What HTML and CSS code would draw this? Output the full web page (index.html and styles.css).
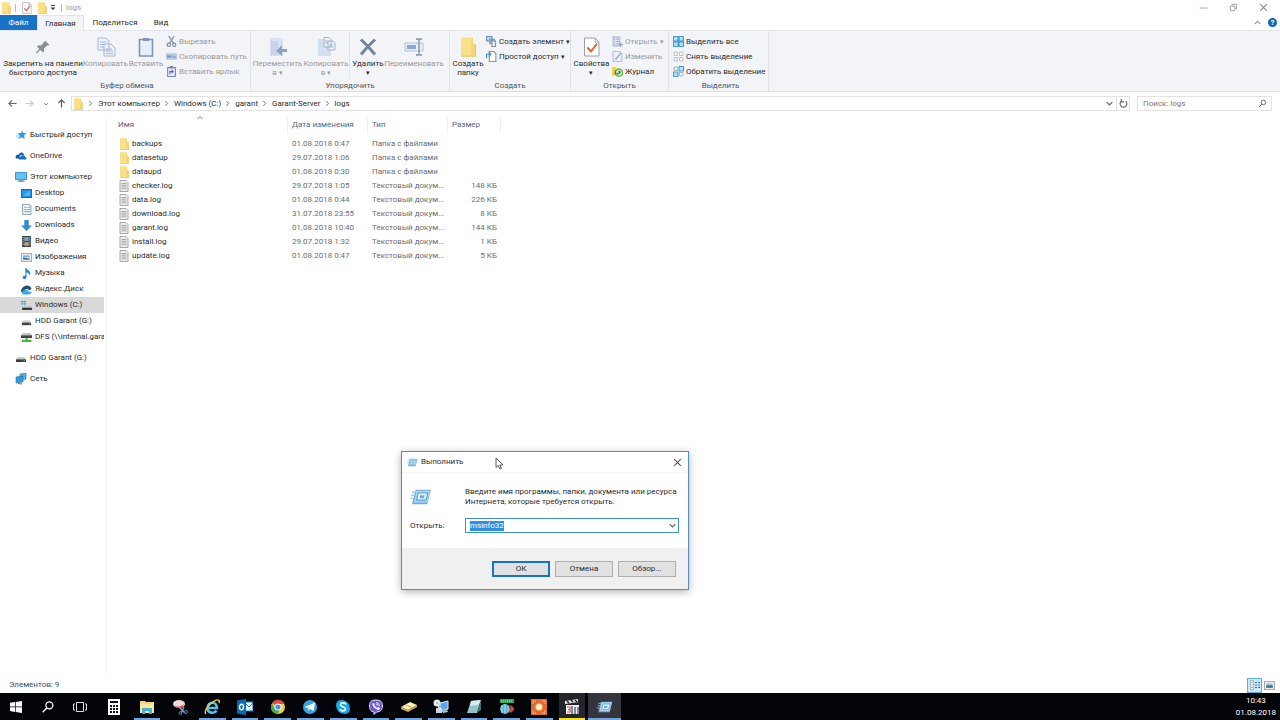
FILE: index.html
```html
<!DOCTYPE html>
<html lang="ru">
<head>
<meta charset="utf-8">
<title>logs</title>
<link rel="stylesheet" href="styles.css">
</head>
<body>
<svg class="sprite" aria-hidden="true">
  <symbol id="folder" viewBox="0 0 12 12"><path d="M2 .5h7v3l1.500 1v7H2z" fill="#f5d777"/><path d="M2 .5h5l1 1v10H2z" fill="#fbe08a"/><path d="M2 11.500h8.500V4.500" fill="none" stroke="#e6c765" stroke-width=".7"/></symbol>
  <symbol id="file" viewBox="0 0 12 12"><path d="M2 .5h6l2 2v9H2z" fill="#efefef" stroke="#949494" stroke-width=".8"/><path d="M3.500 3.500h5M3.500 5.200h5M3.500 7h5M3.500 8.800h5" stroke="#9a9fa3" stroke-width=".9"/></symbol>
  <symbol id="drive" viewBox="0 0 12 12"><path d="M2.500 5h7l1.500 2.500H1z" fill="#c9c9c9"/><path d="M1 7.300h10v2.700H1z" fill="#3d3f42"/><path d="M8.500 8.300h1.500v.8H8.500z" fill="#7bdc74"/></symbol>
  <symbol id="run" viewBox="0 0 24 20"><path d="M6 2h17l-4 16H2z" fill="#72addb"/><path d="M7 3h15l-3 13H4z" fill="#a9d5f1"/><path d="M9 5.500h10.500l-2 8H7z" fill="#e9f7ff" stroke="#5a9fd2" stroke-width="1.200"/><path d="M11 8h5l-.8 3.500h-5z" fill="#69abd9"/><path d="M2 4.500h4M1 8h4M0 11.500h4" stroke="#9ac8e8" stroke-width="1.300"/></symbol>
  <symbol id="check" viewBox="0 0 18 20"><path d="M1.500 1h10.500l4 4v14H1.500z" fill="#fff" stroke="#9aa0a6"/><path d="M12 1v4h4" fill="none" stroke="#9aa0a6"/><path d="M4.500 10.500l3.500 4 6-8" fill="none" stroke="#e2603b" stroke-width="2"/></symbol>
  <symbol id="copy" viewBox="0 0 20 20"><path d="M2 1h8l3 3v9H2zM8 7h7l4 4v8H8z" fill="#edf1fa" stroke="#a9b7d4"/><path d="M4 5h6M4 7.500h4M4 10h4M10 12h6M10 14h7M10 16.500h7" stroke="#a5b6dc"/></symbol>
  <symbol id="chev" viewBox="0 0 6 6"><path d="M2 1l2 2-2 2" fill="none" stroke="#666" stroke-width=".8"/></symbol>
  <symbol id="down" viewBox="0 0 8 8"><path d="M1.500 2.800L4 5.300l2.500-2.500" fill="none" stroke="#666" stroke-width="1.100"/></symbol>
  <symbol id="glass" viewBox="0 0 12 12"><circle cx="7.200" cy="4.600" r="3" fill="none" stroke="currentColor" stroke-width="1.100"/><path d="M5 6.800L1.500 10.500" stroke="currentColor" stroke-width="1.300"/></symbol>
  <symbol id="close" viewBox="0 0 10 10"><path d="M2 2l6 6m0-6l-6 6" stroke="currentColor" fill="none"/></symbol>
</svg>

<header class="titlebar">
  <svg class="icon12"><use href="#folder"/></svg><i class="rule"></i>
  <button class="quick" aria-label="Свойства"><svg class="icon12"><use href="#check"/></svg></button>
  <button class="quick" aria-label="Новая папка"><svg class="icon12"><use href="#folder"/></svg></button>
  <button class="quick narrow" aria-label="Настройка панели"><svg class="icon6" viewBox="0 0 6 6"><path d="M1 .5h4" stroke="#444"/><path d="M.5 2.500h5L3 5z" fill="#333"/></svg></button>
  <i class="rule"></i><span class="window-name">logs</span>
  <div class="window-buttons">
    <button aria-label="Свернуть"><svg class="icon10" viewBox="0 0 10 10"><path d="M1.500 5.500h7" stroke="#aaa"/></svg></button>
    <button aria-label="Восстановить"><svg class="icon8" viewBox="0 0 10 10"><path d="M3.500 3V1.500h5v5H7M1.500 3.500h5v5h-5z" fill="none" stroke="#999"/></svg></button>
    <button aria-label="Закрыть"><svg class="icon10"><use href="#close"/></svg></button>
  </div>
</header>

<nav class="tabs">
  <button class="tab file-tab">Файл</button>
  <button class="tab active">Главная</button>
  <button class="tab share">Поделиться</button>
  <button class="tab view">Вид</button>
  <div class="tab-tools">
    <button aria-label="Свернуть ленту"><svg class="icon8" viewBox="0 0 8 8"><path d="M1.500 5.500L4 3l2.500 2.500" fill="none" stroke="#999"/></svg></button>
    <button class="help" aria-label="Справка">?</button>
  </div>
</nav>

<section class="ribbon">
  <div class="group g-clip">
    <div class="tools">
      <button class="big w-pin"><svg class="icon20" viewBox="0 0 20 20"><path d="M12.500 4l4 4-1.500.8-1-.3-3 3 .1 2.800-1.200 1.200-6-6 1.200-1.200 2.800.1 3-3-.2-1z" fill="#8a8f96"/><path d="M7.500 11.500l-4 4.500" stroke="#8a8f96" stroke-width="1.300"/></svg><span>Закрепить на панели<br>быстрого доступа</span></button>
      <button class="big w-copy off"><svg class="icon20"><use href="#copy"/></svg><span>Копировать</span></button>
      <button class="big w-paste off"><svg class="icon20" viewBox="0 0 20 20"><path d="M3.500 2.500h13V19h-13z" fill="#e9effa" stroke="#7f93b7" stroke-width="1.600"/><path d="M7 1h6v3H7z" fill="#7f93b7"/></svg><span>Вставить</span></button>
      <div class="small-list">
        <button class="small off"><svg class="icon10" viewBox="0 0 10 10"><path d="M2.500 0L7 7M7.500 0L3 7" stroke="#8795b0" stroke-width="1.200"/><circle cx="2.500" cy="8" r="1.500" fill="none" stroke="#7888a8"/><circle cx="7.500" cy="8" r="1.500" fill="none" stroke="#7888a8"/></svg>Вырезать</button>
        <button class="small off"><svg class="icon10" viewBox="0 0 10 10"><path d="M0 2h10v6H0z" fill="#b9cae6"/><path d="M1 4l1 2 1-2 1 2 1-2M6 5.500h3" fill="none" stroke="#6c7fa6" stroke-width=".8"/></svg>Скопировать путь</button>
        <button class="small off"><svg class="icon10" viewBox="0 0 10 10"><path d="M1.500 1.500h7v8h-7z" fill="#e8effb" stroke="#7487b0"/><path d="M3.500 0h3v2h-3z" fill="#7487b0"/><path d="M3.500 7.500V5H6M5 3.500L6.500 5 5 6.500" fill="none" stroke="#526da4"/></svg>Вставить ярлык</button>
      </div>
    </div>
    <div class="caption">Буфер обмена</div>
  </div>
  <div class="group g-arrange">
    <div class="tools">
      <button class="big w-move off"><svg class="icon20" viewBox="0 0 20 20"><path d="M2 1h13v18H2z" fill="#d9e2f3"/><path d="M3 4h7v14H3z" fill="#c7d4eb"/><path d="M19 12h-5V8l-6 6 6 5v-4h5z" fill="#8da1c5"/></svg><span>Переместить<br>в <small>▾</small></span></button>
      <button class="big w-to off"><svg class="icon20" viewBox="0 0 20 20"><path d="M2 2h13v17H2z" fill="#d3deef"/><path d="M8 .5h5l2 2V10H8zM12 4h5l2 2v7h-7z" fill="#edf2fa" stroke="#a4b3d0"/><path d="M9 4h4M9 6h3M13 8h4M13 10h4" stroke="#a4b3d0"/></svg><span>Копировать<br>в <small>▾</small></span></button>
      <i class="inner-rule"></i>
      <button class="big w-delete"><svg class="icon20" viewBox="0 0 20 20"><path d="M3 2.500Q10 9 17 17.500M17 2.500Q9 10 3 17.500" fill="none" stroke="#71839f" stroke-width="3"/></svg><span>Удалить<br><small>▾</small></span></button>
      <button class="big w-rename off"><svg class="icon20" viewBox="0 0 20 20"><path d="M1 6h18v8H1z" fill="#e7edf8" stroke="#b4c1da"/><path d="M3 8h9v4H3z" fill="#91a5cc"/><path d="M12 2h2l1 1 1-1h2M15 3v14M12 18h2l1-1 1 1h2" fill="none" stroke="#7f8ca6" stroke-width="1.300"/></svg><span>Переименовать</span></button>
    </div>
    <div class="caption">Упорядочить</div>
  </div>
  <div class="group g-new">
    <div class="tools">
      <button class="big w-new"><svg class="icon20"><use href="#folder"/></svg><span>Создать<br>папку</span></button>
      <div class="small-list">
        <button class="small"><svg class="icon10" viewBox="0 0 10 10"><path d="M.5.5h5v4h-5zM3.500 3h4v4h-4z" fill="#b8dcf3" stroke="#6b8dac"/><path d="M5.500 4.500h3v5h-3z" fill="#fff" stroke="#7a8896"/></svg>Создать элемент <small>▾</small></button>
        <button class="small"><svg class="icon10" viewBox="0 0 10 10"><path d="M3 .5h4l2 2v7H3z" fill="#fff" stroke="#8b9298"/><path d="M.5 6.500V3H4M2.500 1L4.500 3l-2 2" fill="none" stroke="#3e91cf"/></svg>Простой доступ <small>▾</small></button>
      </div>
    </div>
    <div class="caption">Создать</div>
  </div>
  <div class="group g-open">
    <div class="tools">
      <button class="big w-props"><svg class="icon20"><use href="#check"/></svg><span>Свойства<br><small>▾</small></span></button>
      <div class="small-list">
        <button class="small off"><svg class="icon10" viewBox="0 0 10 10"><path d="M1 1h6v8H1z" fill="#e4eafa" stroke="#a9b5d0"/><path d="M2 3h1m1 0h2M2 5h1m1 0h2M2 7h1m1 0h2" stroke="#8699c0"/><path d="M8 6v4M6 8h4" stroke="#91a1c0"/></svg>Открыть <small>▾</small></button>
        <button class="small off"><svg class="icon10" viewBox="0 0 10 10"><path d="M1 .5h6l2 2v7H1z" fill="#edf2fc" stroke="#b4c0d9"/><path d="M3 8l5-6" stroke="#9baed4" stroke-width="1.500"/></svg>Изменить</button>
        <button class="small"><svg class="icon10" viewBox="0 0 10 10"><path d="M0 1h3l1 1h3v7H0z" fill="#f0d34c"/><circle cx="6.500" cy="6" r="3.300" fill="#d7e4d1" stroke="#45a535"/><path d="M6.500 4v2.500L8 5M3 4v3h3" fill="none" stroke="#25852b"/></svg>Журнал</button>
      </div>
    </div>
    <div class="caption">Открыть</div>
  </div>
  <div class="group g-select">
    <div class="tools">
      <div class="small-list">
        <button class="small"><svg class="icon10" viewBox="0 0 10 10"><path d="M.5.5h4v4h-4zM5.500.5h4v4h-4zM.5 5.500h4v4h-4zM5.500 5.500h4v4h-4z" fill="#b5e0f8" stroke="#4b9dd0"/></svg>Выделить все</button>
        <button class="small"><svg class="icon10" viewBox="0 0 10 10"><path d="M1 1h3v3H1zM6 1h3v3H6zM1 6h3v3H1zM6 6h3v3H6z" fill="#fff" stroke="#b4b9be" stroke-width=".8"/></svg>Снять выделение</button>
        <button class="small"><svg class="icon10" viewBox="0 0 10 10"><path d="M1 1h3v3H1zM6 6h3v3H6z" fill="#fff" stroke="#8aa7bd" stroke-width=".8"/><path d="M5.500.5h4v4h-4zM.5 5.500h4v4h-4z" fill="#b5e0f8" stroke="#4b9dd0"/></svg>Обратить выделение</button>
      </div>
    </div>
    <div class="caption">Выделить</div>
  </div>
</section>

<div class="navbar">
  <div class="nav-arrows">
    <button aria-label="Назад"><svg class="icon8" viewBox="0 0 10 10"><path d="M9.500 5H1M4.500 1.500L1 5l3.500 3.500" fill="none" stroke="#666" stroke-width="1.300"/></svg></button>
    <button aria-label="Вперед"><svg class="icon8" viewBox="0 0 10 10"><path d="M.5 5H9M5.500 1.500L9 5 5.500 8.500" fill="none" stroke="#ccc" stroke-width="1.300"/></svg></button>
    <button aria-label="Последние"><svg class="icon6"><use href="#down"/></svg></button>
    <button aria-label="Вверх"><svg class="icon8" viewBox="0 0 10 10"><path d="M5 9.500V1M1.500 4.500L5 1l3.500 3.500" fill="none" stroke="#555" stroke-width="1.300"/></svg></button>
  </div>
  <div class="address">
    <svg class="icon12"><use href="#folder"/></svg>
    <svg class="sep"><use href="#chev"/></svg><a href="#">Этот компьютер</a>
    <svg class="sep"><use href="#chev"/></svg><a href="#">Windows (C:)</a>
    <svg class="sep"><use href="#chev"/></svg><a href="#">garant</a>
    <svg class="sep"><use href="#chev"/></svg><a href="#">Garant-Server</a>
    <svg class="sep"><use href="#chev"/></svg><a href="#">logs</a>
    <button class="drop" aria-label="Адреса"><svg class="icon8"><use href="#down"/></svg></button>
    <button class="refresh" aria-label="Обновить"><svg class="icon8" viewBox="0 0 8 8"><path d="M2 2a3 3 0 1 0 4 0M2 0v2.500h2.500" fill="none" stroke="#666"/></svg></button>
  </div>
  <label class="search"><input type="search" placeholder="Поиск: logs" aria-label="Поиск: logs"><svg class="icon8"><use href="#glass"/></svg></label>
</div>

<main class="content">
  <nav class="sidebar">
    <a class="place" href="#"><svg class="icon12" viewBox="0 0 12 12"><path d="M7 1l1 3 3.500.5-2.500 2 .8 3.500-3-1.800L4 10l.8-3.500L2.500 4.500 6 4z" fill="#2f97e0"/><path d="M1 7h3M2 9h2" stroke="#86c6ef"/></svg>Быстрый доступ</a>
    <a class="place" href="#"><svg class="icon12" viewBox="0 0 12 12"><path d="M1 8.500C-.5 5 3 4 4 4.500 5 1.500 9 2 9 5c-3-1-5 .5-5 3.500z" fill="#0a5ca8"/><path d="M4 9.500C2.500 7 5 6 6 6.500c1-2.500 4-1.500 4 .5 2 0 2 2.500.5 2.500z" fill="#1672c4"/></svg>OneDrive</a>
    <div>
      <a class="place" href="#"><svg class="icon12" viewBox="0 0 12 12"><path d="M.5 1.500h11v7H.5z" fill="#62c4f2" stroke="#3e95c4"/><path d="M4 9h4v1.500H4zM2.500 10.500h7" fill="#789" stroke="#86a6b9"/></svg>Этот компьютер</a>
      <a class="place sub" href="#"><svg class="icon10" viewBox="0 0 10 10"><path d="M.5 1.500h9v7h-9z" fill="#209aec" stroke="#176eb0"/><path d="M2 7l6-5v5z" fill="#4db9f6"/></svg>Desktop</a>
      <a class="place sub" href="#"><svg class="icon10" viewBox="0 0 10 10"><path d="M1.500.5h6l1.500 1.500v7.500H1.500z" fill="#f4f9fc" stroke="#99a8b1"/><path d="M3 3h2m1 0h2M3 5h2m1 0h2M3 7h5" stroke="#5b9dc4"/></svg>Documents</a>
      <a class="place sub" href="#"><svg class="icon10" viewBox="0 0 10 10"><path d="M3 0h4v5h3L5 10 0 5h3z" fill="#3889cf"/></svg>Downloads</a>
      <a class="place sub" href="#"><svg class="icon10" viewBox="0 0 10 10"><path d="M1 0h8v10H1z" fill="#3b4148"/><path d="M3 1h4v3.500H3z" fill="#7aa8d8"/><path d="M3 5.500h4V9H3z" fill="#b2a088"/><path d="M2 1v8M8 1v8" stroke="#ddd" stroke-dasharray="1" stroke-width=".8"/></svg>Видео</a>
      <a class="place sub" href="#"><svg class="icon10" viewBox="0 0 10 10"><path d="M.5 1.500h9v7h-9z" fill="#fff" stroke="#a6afb5"/><path d="M2 3h6v2H2z" fill="#73b9e8"/><path d="M2 7V4.500l2 1 4 .5v1z" fill="#356b8e"/></svg>Изображения</a>
      <a class="place sub" href="#"><svg class="icon10" viewBox="0 0 10 10"><path d="M4 0h1c0 2 3.500 2 3.500 5L7.500 6.500c0-2-2-2.500-2.500-2.500v4c0 3-4 2.500-3.500.2C2 7 3 7 4 7z" fill="#168bd3"/></svg>Музыка</a>
      <a class="place sub" href="#"><svg class="icon10" viewBox="0 0 10 10"><path d="M0 7C0 2 7-1 9.500 4L8 6C5 3 3 5 3 8z" fill="#25506f"/><path d="M1 9c0-5 5-5 6-2h3c-1 3-6 3-9 2z" fill="#3aa5e7"/></svg>Яндекс.Диск</a>
      <a class="place sub selected" href="#"><svg class="icon10" viewBox="0 0 10 10"><path d="M0 1h2v1H0zM2.500 1h2v1h-2zM0 3h2v1H0zM2.500 3h2v1h-2z" fill="#18a7e2"/><path d="M2 5h7l1 2H1z" fill="#c6c9cc"/><path d="M1 7h9v2H1z" fill="#333"/></svg>Windows (C:)</a>
      <a class="place sub" href="#"><svg class="icon10"><use href="#drive"/></svg>HDD Garant (G:)</a>
      <a class="place sub" href="#"><svg class="icon10" viewBox="0 0 10 10"><path d="M1.500 1h7L10 3H0z" fill="#c4c7c9"/><path d="M0 3h10v2.500H0z" fill="#444"/><path d="M4 5.500h2V7h3.500v2h-9V7H4z" fill="#47b648"/></svg>DFS (\\internal.gara</a>
    </div>
    <a class="place" href="#"><svg class="icon12"><use href="#drive"/></svg>HDD Garant (G:)</a>
    <a class="place" href="#"><svg class="icon12" viewBox="0 0 12 12"><path d="M5 1l6-1v6l-6 1z" fill="#58aee3" stroke="#286b9e" stroke-width=".6"/><path d="M1 4l7-1v6l-7 1z" fill="#329ad8" stroke="#286b9e" stroke-width=".6"/><path d="M3 10.500l4 .5" stroke="#54778d"/></svg>Сеть</a>
  </nav>
  <section class="files">
    <table>
      <colgroup><col class="c-name"><col class="c-date"><col class="c-type"><col class="c-size"></colgroup>
      <thead><tr><th><span class="sort"><svg class="icon6" viewBox="0 0 6 6"><path d="M.5 4L3 1.500 5.500 4" fill="none" stroke="#888"/></svg></span>Имя</th><th>Дата изменения</th><th>Тип</th><th>Размер</th></tr></thead>
      <tbody>
        <tr><td><svg class="icon12"><use href="#folder"/></svg>backups</td><td>01.08.2018 0:47</td><td>Папка с файлами</td><td></td></tr>
        <tr><td><svg class="icon12"><use href="#folder"/></svg>datasetup</td><td>29.07.2018 1:06</td><td>Папка с файлами</td><td></td></tr>
        <tr><td><svg class="icon12"><use href="#folder"/></svg>dataupd</td><td>01.08.2018 0:30</td><td>Папка с файлами</td><td></td></tr>
        <tr><td><svg class="icon12"><use href="#file"/></svg>checker.log</td><td>29.07.2018 1:05</td><td>Текстовый докум...</td><td>148 КБ</td></tr>
        <tr><td><svg class="icon12"><use href="#file"/></svg>data.log</td><td>01.08.2018 0:44</td><td>Текстовый докум...</td><td>226 КБ</td></tr>
        <tr><td><svg class="icon12"><use href="#file"/></svg>download.log</td><td>31.07.2018 23:55</td><td>Текстовый докум...</td><td>8 КБ</td></tr>
        <tr><td><svg class="icon12"><use href="#file"/></svg>garant.log</td><td>01.08.2018 10:40</td><td>Текстовый докум...</td><td>144 КБ</td></tr>
        <tr><td><svg class="icon12"><use href="#file"/></svg>install.log</td><td>29.07.2018 1:32</td><td>Текстовый докум...</td><td>1 КБ</td></tr>
        <tr><td><svg class="icon12"><use href="#file"/></svg>update.log</td><td>01.08.2018 0:47</td><td>Текстовый докум...</td><td>5 КБ</td></tr>
      </tbody>
    </table>
  </section>
</main>

<footer class="status">
  <span>Элементов: 9</span>
  <div class="views">
    <button class="on" aria-label="Таблица"><svg class="icon12" viewBox="0 0 12 12"><path d="M1.500 1.500h3v9h-3z" fill="#fff" stroke="#86a5b7" stroke-width=".7"/><path d="M2.500 3.500h1M2.500 6h1M2.500 8.500h1M6 3.500h2m1 0h2M6 6h2m1 0h2M6 8.500h2m1 0h2" stroke="#46758f"/></svg></button>
    <button aria-label="Крупные значки"><svg class="icon10" viewBox="0 0 10 10"><path d="M.5 1.500h9v7h-9z" fill="#fff" stroke="#aaa"/><path d="M2 3h6v4H2z" fill="#8fc3e8"/><path d="M2 5h6v2H2z" fill="#3a6484"/></svg></button>
  </div>
</footer>

<nav class="taskbar">
  <div class="system">
    <button aria-label="Пуск"><svg class="icon12" viewBox="0 0 12 12"><path d="M0 1.800L5 1v4.600H0zM5.700.9L12 0v5.600H5.700zM0 6.300h5v4.600l-5-.8zM5.700 6.300H12V12l-6.300-.9z" fill="#fff"/></svg></button>
    <button aria-label="Поиск"><svg class="icon14"><use href="#glass"/></svg></button>
    <button aria-label="Представление задач"><svg class="icon14" viewBox="0 0 14 14"><path d="M3.500 2.500h7v9h-7zM2 4H.5v6H2M12 4h1.500v6H12" fill="none" stroke="#ddd"/></svg></button>
  </div>
  <div class="apps">
    <button aria-label="Калькулятор"><svg class="icon16" viewBox="0 0 16 16"><path d="M2 0h12v16H2z" fill="#fff"/><path d="M4 2h8v2H4z" fill="#111"/><path d="M4 7h8M4 10h8M4 13h8" stroke="#111" stroke-width="2" stroke-dasharray="2 1"/></svg></button>
    <button class="open" aria-label="Проводник"><svg class="icon16" viewBox="0 0 16 16"><path d="M1 2h5l1 1h8v11H1z" fill="#f6d67a"/><path d="M1 5h14v9H1z" fill="#fce69f"/><path d="M3 15V9h10v6h-3v-3H6v3z" fill="#42b2dd"/></svg></button>
    <button aria-label="Ножницы"><svg class="icon16" viewBox="0 0 16 16"><ellipse cx="7" cy="5" rx="6" ry="4" fill="#f2d9db"/><path d="M2 6q5 4 10-1l-2 4H5z" fill="#c74a5a"/><path d="M7 8l6 6M12 8l-3 6" stroke="#9aa9c4" stroke-width="1.300"/><circle cx="14" cy="13" r="1.500" fill="none" stroke="#597fc2"/><circle cx="8.500" cy="14" r="1.500" fill="none" stroke="#597fc2"/></svg></button>
    <button class="open" aria-label="Internet Explorer"><svg class="icon16" viewBox="0 0 16 16"><path d="M3.500 9H13c0-7-9.500-7-9.500 0 0 5.500 7 6 9 2.500" fill="none" stroke="#55c1f2" stroke-width="2.600"/><path d="M2 15C-2 11 12-2 15 1.500c.8 1-.3 2.500-.3 2.500" fill="none" stroke="#f2cd45" stroke-width="1.400"/></svg></button>
    <button class="open" aria-label="Outlook"><svg class="icon16" viewBox="0 0 16 16"><path d="M8 3h8v9H8z" fill="#e9f4fd" stroke="#1978c8"/><path d="M8 4l4 4 4-4" fill="none" stroke="#1978c8"/><path d="M0 1.500L9 0v16l-9-1.500z" fill="#0869b7"/><ellipse cx="4.500" cy="8" rx="2" ry="2.700" fill="none" stroke="#fff" stroke-width="1.400"/></svg></button>
    <button class="open" aria-label="Chrome"><svg class="icon16" viewBox="0 0 16 16"><circle cx="8" cy="8" r="7" fill="#f4ce40"/><path d="M8 8L2 4.300A7 7 0 0 1 14.500 5H8z" fill="#e34a3e"/><path d="M2 4.300A7 7 0 0 0 7.500 15L10.500 9.500 5 10z" fill="#41a853"/><circle cx="8" cy="8" r="3.500" fill="#fff"/><circle cx="8" cy="8" r="2.600" fill="#4c8df0"/></svg></button>
    <button class="open" aria-label="Telegram"><svg class="icon16" viewBox="0 0 16 16"><circle cx="8" cy="8" r="7" fill="#36a5dc"/><path d="M2.500 8L13 3.500 11.500 12 8 9.800 6.500 12 6 9z" fill="#fff"/><path d="M6 9l5-3.500L7 9.500 6.500 12z" fill="#bad9ea"/></svg></button>
    <button class="open" aria-label="Skype"><svg class="icon16" viewBox="0 0 16 16"><circle cx="6" cy="6" r="5" fill="#12a9e9"/><circle cx="10" cy="10" r="5" fill="#12a9e9"/><circle cx="8" cy="8" r="6.500" fill="#12a9e9"/><path d="M11 5.500C10 3 5 3.500 5.500 6c.4 2 5 1.500 5 4 0 2.500-5 2.500-5.500 0" fill="none" stroke="#fff" stroke-width="1.600"/></svg></button>
    <button class="open" aria-label="Viber"><svg class="icon16" viewBox="0 0 16 16"><path d="M8 1c5 0 6.500 2 6.500 6S12 13 8.500 13L6 15.500V13C3 12.500 1.500 11 1.500 7S3 1 8 1z" fill="#7558d1" stroke="#e3dcfa"/><path d="M5 4c-2 1 2 7 6 7l1-2-2-1-1 1-3-3 1-1z" fill="#fff"/><path d="M8 3.500q3.500 0 3.500 3.500M8 5q2 0 2 2" fill="none" stroke="#fff" stroke-width=".8"/></svg></button>
    <button class="open" aria-label="Архив"><svg class="icon16" viewBox="0 0 16 16"><path d="M0 8l9-5 7 3-9 5z" fill="#fff1ad"/><path d="M0 8l7 3v2l-7-3zM7 11l9-5v2l-9 5z" fill="#c9aa66"/><path d="M5 6l7 3" stroke="#b8a86a"/></svg></button>
    <button class="open" aria-label="Удаленный доступ"><svg class="icon16" viewBox="0 0 16 16"><path d="M7 4l8-2v8l-8 2z" fill="#5da3ea" stroke="#d2e7f7"/><path d="M9 12l5-1 1 2-5 1z" fill="#b9cadd"/><circle cx="4" cy="4" r="3.500" fill="#e4e9ee"/><path d="M3 3l2 2" stroke="#8d99a6"/><path d="M3 9h6v5H3z" fill="#c9d6e5"/><path d="M5 7l3 4" stroke="#dfe6ee" stroke-width="1.500"/></svg></button>
    <button class="open" aria-label="Заметки"><svg class="icon16" viewBox="0 0 16 16"><path d="M5 2l10-1-4 13H1z" fill="#8fc4ca"/><path d="M5 2l10-1-3 5-8 1z" fill="#d9edf0"/><path d="M11 14l4-13v10z" fill="#4b6d75"/></svg></button>
    <button class="open" aria-label="Метеор"><svg class="icon16" viewBox="0 0 16 16"><path d="M1 0h14v4H1z" fill="#28a65a"/><path d="M2 2h12" stroke="#c2efcd" stroke-dasharray="1 1"/><circle cx="6" cy="10" r="5" fill="#56add4"/><path d="M3 6v8M6 5v9M9 7v6" stroke="#d9f0f8" stroke-width=".8"/><path d="M10 6q5 1 5 5l-4 3-1-3 2-2z" fill="#d3552e"/></svg></button>
    <button class="open" aria-label="Запись"><svg class="icon16" viewBox="0 0 16 16"><path d="M0 0h16v16H0z" fill="#df6a30"/><path d="M2 5V2h3M11 2h3v3M14 11v3h-3M5 14H2v-3" fill="none" stroke="#ffb072"/><circle cx="8" cy="8" r="4" fill="#f79a4b"/><circle cx="8" cy="8" r="3" fill="#fff6d8"/></svg></button>
    <button class="open alert" aria-label="Видеоредактор"><svg class="icon16" viewBox="0 0 16 16"><path d="M1 2l13-2v3L1 5zM2 6h13v9H2z" fill="#eee"/><path d="M3 2l2 2M7 1l2 2M11 1l2 2" stroke="#111" stroke-width="1.500"/><path d="M2 7h5v7H2z" fill="#fff"/><path d="M3 8h3v5H3M4 10.500h2" fill="none" stroke="#d35439" stroke-width="1.200"/><path d="M8 7v8M11 8v7M14 8v7" stroke="#4b5573" stroke-width="1.300"/></svg></button>
    <button class="open current" aria-label="Выполнить"><svg class="icon16"><use href="#run"/></svg></button>
  </div>
  <time class="clock">10:43<br>01.08.2018</time>
</nav>

<section class="dialog" role="dialog" aria-labelledby="run-title">
  <header class="dialog-head"><svg class="icon10"><use href="#run"/></svg><span id="run-title">Выполнить</span><button aria-label="Закрыть окно"><svg class="icon10"><use href="#close"/></svg></button></header>
  <div class="dialog-body">
    <svg class="run-icon"><use href="#run"/></svg>
    <p>Введите имя программы, папки, документа или ресурса<br>Интернета, которые требуется открыть.</p>
    <label for="command">Открыть:</label>
    <div class="combo"><input id="command" type="text" value="msinfo32"><button aria-label="Список команд"><svg class="icon8"><use href="#down"/></svg></button></div>
  </div>
  <footer class="dialog-foot"><button class="default">ОК</button><button>Отмена</button><button>Обзор...</button></footer>
  <svg class="pointer" viewBox="0 0 9 13"><path d="M1 1v9.500l2.200-2 1.700 3.500 1.500-.7L4.800 8H8z" fill="#fff" stroke="#333" stroke-width=".8"/></svg>
</section>
<script src="app.js"></script>
</body>
</html>
```
FILE: styles.css
```css
* { box-sizing: border-box; }
body {
  margin: 0;
  height: 100vh;
  display: flex;
  flex-direction: column;
  overflow: hidden;
  background: #fff;
  color: #2b2b2b;
  font: 8px/10px Roboto, "Noto Sans", sans-serif;
}
button { border: 0; padding: 0; background: none; font: inherit; color: inherit; display: flex; align-items: center; justify-content: center; white-space: nowrap; }
input { font: inherit; color: inherit; min-width: 0; }
a { color: inherit; text-decoration: none; }
svg { flex: none; display: block; }
small { font-size: 7px; }
.sprite { position: absolute; width: 0; height: 0; }
.icon6 { width: 6px; height: 6px; }
.icon8 { width: 9px; height: 9px; }
.icon10 { width: 11px; height: 11px; }
.icon12 { width: 12px; height: 12px; }
.icon14 { width: 14px; height: 14px; }
.icon16 { width: 16px; height: 16px; }
.icon20 { width: 20px; height: 20px; }

.titlebar { height: 15px; display: flex; align-items: center; }
.rule { width: 1px; height: 8px; margin: 0 3px; background: #bbb; }
.quick { width: 15px; }
.titlebar .narrow { width: 8px; }
.titlebar .quick + .rule { margin: 0 4px; }
.window-name { color: #999; }
.window-buttons { margin-left: auto; display: flex; color: #888; padding-right: 2px; }
.window-buttons button { width: 30px; }

.tabs { height: 16px; display: flex; border-bottom: 1px solid #e4e5e8; }
.tab { height: 15px; }
.file-tab { width: 37px; background: #1673c6; color: #fff; }
.active { width: 47px; height: 16px; background: #f3f4f8; border: 1px solid #e4e5e8; border-bottom: 0; }
.share { width: 62px; }
.view { width: 30px; }
.tab-tools { margin-left: auto; display: flex; align-items: center; gap: 6px; padding-right: 3px; }
.help { width: 9px; height: 9px; border-radius: 50%; background: #0869b8; color: #fff; font-weight: 700; }

.ribbon { height: 61px; display: flex; background: #f3f4f8; border-bottom: 1px solid #dfe0e4; }
.group { display: flex; flex-direction: column; border-right: 1px solid #e3e4e8; }
.g-clip { width: 251px; padding-left: 4px; }
.g-arrange { width: 199px; }
.g-new { width: 121px; }
.g-open { width: 98px; }
.g-select { width: 100px; padding-left: 4px; }
.tools { height: 50px; display: flex; }
.caption { text-align: center; color: #555; }
.big { flex-direction: column; justify-content: flex-start; padding-top: 6px; gap: 2px; }
.big span { line-height: 9px; text-align: center; }
.off { color: #999; }
.w-pin { width: 78px; }
.w-copy { width: 47px; }
.w-paste { width: 34px; }
.w-move { width: 53px; }
.w-to { width: 44px; }
.w-delete { width: 34px; }
.w-rename { width: 58px; }
.w-new { width: 36px; }
.w-props { width: 41px; }
.inner-rule { width: 1px; height: 46px; margin: 1px; background: #e3e4e8; }
.small-list { display: flex; flex-direction: column; padding-top: 3px; }
.g-clip .small-list { padding-left: 3px; }
.small { height: 15px; justify-content: flex-start; gap: 2px; }

.navbar { height: 23px; display: flex; align-items: center; padding: 0 8px; }
.nav-arrows { width: 63px; display: flex; align-items: center; justify-content: space-between; padding-right: 5px; }
.address { flex: 1; height: 15px; display: flex; align-items: center; border: 1px solid #e2e2e2; }
.sep { width: 7px; height: 7px; margin: 0 4px 0 3px; }
.address .drop { margin-left: auto; width: 14px; height: 13px; }
.address .refresh { width: 13px; height: 13px; border-left: 1px solid #e2e2e2; }
.search { width: 135px; height: 15px; margin-left: 7px; display: flex; align-items: center; border: 1px solid #e2e2e2; padding: 0 4px 0 5px; color: #555; }
.search input { flex: 1; border: 0; padding: 0; outline: 0; background: none; }
.search input::placeholder { color: #777; }

.content { flex: 1; min-height: 0; display: flex; }
.sidebar { width: 107px; padding: 12px 2px 0 0; border-right: 1px solid #f4f4f4; display: flex; flex-direction: column; gap: 5px; }
.place { height: 16px; display: flex; align-items: center; gap: 3px; padding-left: 15px; white-space: nowrap; overflow: hidden; }
.sub { padding-left: 21px; }
.selected { background: #d9d9d9; }
.files { flex: 1; padding: 2px 0 0 7px; }
table { border-collapse: separate; border-spacing: 0; table-layout: fixed; width: 387px; }
.c-name { width: 174px; }
.c-date { width: 80px; }
.c-type { width: 80px; }
.c-size { width: 53px; }
th { height: 16px; padding: 0 4px; font-weight: 400; text-align: left; color: #556580; border-right: 1px solid #eee; }
td { height: 14px; padding: 0 4px; color: #6d6d6d; white-space: nowrap; }
thead::after { content: ""; display: block; height: 4px; }
td:first-child { display: flex; align-items: center; gap: 2px; color: #2b2b2b; }
td:last-child { text-align: right; }
th:first-child { position: relative; }
.sort { position: absolute; top: -2px; left: 48%; }

.status { height: 16px; display: flex; align-items: center; justify-content: space-between; padding: 0 3px 0 9px; color: #3c4f6b; }
.views { display: flex; }
.views button { width: 15px; height: 15px; }
.views .on { background: #cbe8f6; border: 1px solid #58b1dc; }

.taskbar { height: 27px; display: flex; background: #020408; color: #fff; }
.system { display: grid; grid-template-columns: repeat(3, 32px); }
.apps { width: 523px; margin-left: 2px; display: grid; grid-template-columns: repeat(16, 1fr); }
.apps button { margin: 0 3px; }
.apps .open { border-bottom: 2px solid #6fa5dc; padding-top: 2px; }
.apps .alert { background: #25262b; border-color: #f6e51c; }
.apps .current { background: #33373d; margin: 0; }
.clock { margin-left: auto; padding: 2px 4px 0 0; line-height: 12px; text-align: center; }

.dialog { position: absolute; left: 401px; top: 451px; width: 288px; background: #fff; border: 1px solid #4d8ec2; box-shadow: 0 2px 8px rgba(0, 0, 0, .3); }
.dialog-head { height: 21px; display: flex; align-items: center; gap: 3px; padding: 0 5px; border-bottom: 1px solid #f4f4f4; }
.dialog-head button { margin-left: auto; color: #555; }
.dialog-body { height: 75px; display: grid; grid-template-columns: 55px minmax(0, 1fr); grid-template-rows: 20px 15px; row-gap: 11px; align-items: center; padding: 14px 9px 0 8px; }
.run-icon { width: 22px; height: 18px; }
.dialog p { margin: 0; white-space: nowrap; }
.combo { height: 15px; display: flex; border: 1px solid #3f8fc9; }
.combo input { flex: 1; border: 0; padding: 0 4px; outline: 0; background: none; }
.combo input::selection { background: #2f8fe6; color: #fff; }
.combo button { width: 12px; }
.dialog-foot { height: 41px; display: flex; justify-content: flex-end; align-items: center; gap: 5px; padding-right: 12px; background: #f0f0f0; }
.dialog-foot button { width: 58px; height: 16px; background: #e1e1e1; border: 1px solid #adadad; }
.dialog-foot .default { border: 2px solid #1673c6; }
.pointer { position: absolute; left: 93px; top: 5px; width: 9px; height: 13px; }
```
FILE: app.js
```js
document.getElementById('command').select();
```
